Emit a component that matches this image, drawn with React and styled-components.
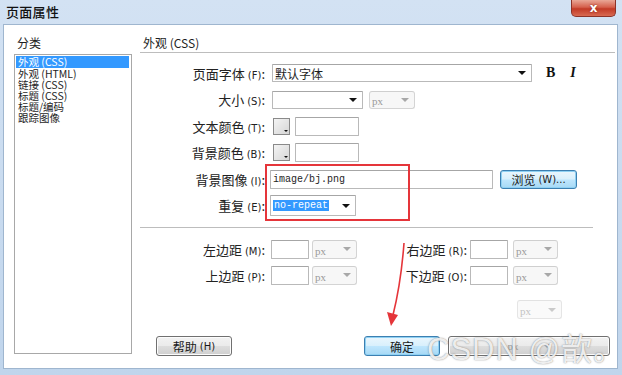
import React from "react";
import styled, { createGlobalStyle } from "styled-components";

const GlobalStyle = createGlobalStyle`
  html, body {
    margin: 0;
    padding: 0;
    background: #ffffff;
  }
  body {
    font-family: "Noto Sans CJK SC", "Liberation Sans", sans-serif;
    color: #1e1e1e;
  }
`;

const categories = ["外观 (CSS)", "外观 (HTML)", "链接 (CSS)", "标题 (CSS)", "标题/编码", "跟踪图像"];

const Window = styled.div`
  width: 622px;
  height: 375px;
  display: flex;
  flex-direction: column;
  background: linear-gradient(180deg, #d3e2f3 0%, #c0d5ec 100%);
  overflow: hidden;
`;

const TitleBar = styled.div`
  height: 24px;
  display: flex;
  justify-content: space-between;
  align-items: flex-start;
`;

const Title = styled.div`
  padding: 4px 0 0 6px;
  font-size: 13px;
  line-height: 16px;
  font-weight: 500;
  color: #111;
  letter-spacing: 0.3px;
`;

const CloseButton = styled.div`
  width: 43px;
  height: 16px;
  margin-right: 6px;
  border: 1px solid #8c3328;
  border-top: none;
  border-radius: 0 0 5px 5px;
  background: linear-gradient(180deg, #e9a796 0%, #d5604c 45%, #c23a26 55%, #d86a52 100%);
  display: flex;
  align-items: center;
  justify-content: center;
  color: #fff;
  font-family: "DejaVu Sans", sans-serif;
  font-weight: bold;
  font-size: 12px;
  line-height: 1;
  text-shadow: 0 0 2px #7a1a10;
`;

const Client = styled.div`
  position: relative;
  flex: 1;
  margin: 0 4px 6px 3px;
  background: #ffffff;
  border: 1px solid #9fb6cf;
  display: flex;
  padding: 11px 0 0 10px;
`;

const Sidebar = styled.div`
  width: 118px;
  display: flex;
  flex-direction: column;
`;

const Caption = styled.div`
  height: 18px;
  line-height: 14px;
  font-size: 12px;
  padding-left: 3px;
`;

const ListBox = styled.div`
  height: 297px;
  border: 1px solid #a8a8a8;
  padding: 1px 2px 0 1px;
`;

const ListItem = styled.div`
  height: 11px;
  line-height: 11px;
  font-size: 10.5px;
  padding-left: 2px;
  white-space: nowrap;
  background: ${(p) => (p.$active ? "#3399ff" : "transparent")};
  color: ${(p) => (p.$active ? "#ffffff" : "#1e1e1e")};
  &:first-child {
    height: 12px;
    line-height: 12px;
  }
`;

const Main = styled.div`
  flex: 1;
  margin-left: 8px;
  display: flex;
  flex-direction: column;
`;

const Heading = styled.div`
  height: 16px;
  line-height: 14px;
  font-size: 12px;
  padding-left: 3px;
`;

const Rule = styled.div`
  height: 0;
  border-top: 1px solid #bdbdbd;
  border-bottom: 1px solid #ffffff;
  margin-right: ${(p) => p.$right || 0}px;
  margin-top: ${(p) => p.$top || 0}px;
`;

const Rows = styled.div`
  margin-top: ${(p) => p.$top}px;
  display: flex;
  flex-direction: column;
`;

const Row = styled.div`
  height: ${(p) => p.$h || 26.5}px;
  display: flex;
  align-items: center;
`;

const Label = styled.div`
  width: ${(p) => p.$w || 125}px;
  flex: none;
  text-align: right;
  font-size: 13px;
  white-space: nowrap;
  margin-right: ${(p) => p.$gap ?? 6}px;
  color: #222;
`;

const Key = styled.span`
  font-family: "DejaVu Sans", sans-serif;
  font-size: 10px;
  margin-left: 3px;
`;

const Box = styled.div`
  box-sizing: border-box;
  width: ${(p) => p.$w}px;
  height: ${(p) => p.$h || 19}px;
  margin-left: ${(p) => p.$ml || 0}px;
  flex: none;
  border: 1px solid ${(p) => (p.$disabled ? "#d4d4d4" : "#b9b9b9")};
  border-top-color: ${(p) => (p.$disabled ? "#cfcfcf" : "#a6a6a6")};
  border-radius: ${(p) => (p.$disabled ? 3 : 1)}px;
  background: ${(p) => (p.$disabled ? "#f7f7f7" : "#ffffff")};
  display: flex;
  align-items: center;
  padding: 0 5px 0 2px;
  font-size: 12px;
  opacity: ${(p) => p.$fade || 1};
`;

const Value = styled.span`
  flex: 1;
  white-space: nowrap;
  overflow: hidden;
  font-family: ${(p) => (p.$mono ? '"Liberation Mono", "DejaVu Sans Mono", monospace' : "inherit")};
  font-size: ${(p) => (p.$mono ? 10 : 12)}px;
  color: ${(p) => (p.$disabled ? "#9a9a9a" : "#1e1e1e")};
`;

const Highlight = styled.span`
  background: #3399ff;
  color: #fff;
  padding: 1px 1px;
`;

const Arrow = styled.span`
  width: 0;
  height: 0;
  border-left: 4px solid transparent;
  border-right: 4px solid transparent;
  border-top: 4px solid ${(p) => (p.$disabled ? "#a8a8a8" : "#111")};
  flex: none;
`;

const Swatch = styled.div`
  position: relative;
  box-sizing: border-box;
  width: 17px;
  height: 17px;
  margin-left: 2px;
  margin-right: 5px;
  flex: none;
  border: 1px solid #8a8a8a;
  background: linear-gradient(135deg, #f4f4f4 0%, #d6d6d6 100%);
  &::after {
    content: "";
    position: absolute;
    right: 1px;
    bottom: 2px;
    border-left: 2px solid transparent;
    border-right: 2px solid transparent;
    border-top: 2px solid #111;
  }
`;

const StyleButton = styled.span`
  font-family: "Liberation Serif", serif;
  font-weight: bold;
  font-size: 14px;
  font-style: ${(p) => (p.$italic ? "italic" : "normal")};
  margin-left: ${(p) => p.$ml}px;
  color: #111;
`;

const Button = styled.div`
  box-sizing: border-box;
  width: ${(p) => p.$w}px;
  height: ${(p) => p.$h || 20}px;
  margin-left: ${(p) => p.$ml || 0}px;
  flex: none;
  display: flex;
  align-items: center;
  justify-content: center;
  gap: ${(p) => p.$gap || 0}px;
  font-size: 12px;
  border-radius: 3px;
  border: 1px solid ${(p) => (p.$focus ? "#3c7fb1" : "#707070")};
  background: ${(p) =>
    p.$focus
      ? "linear-gradient(180deg, #eaf6fd 0%, #d9f0fc 48%, #bee6fd 52%, #a7d9f5 100%)"
      : "linear-gradient(180deg, #f2f2f2 0%, #ebebeb 48%, #dddddd 52%, #cfcfcf 100%)"};
  box-shadow: inset 0 0 0 1px ${(p) => (p.$focus ? "#8fd1f3" : "#fcfcfc")};
  color: #1a1a1a;
`;

const Faint = styled.span`
  color: #9a9a9a;
  font-family: "Liberation Serif", serif;
  font-size: 11px;
`;

const ButtonRow = styled.div`
  margin-top: ${(p) => p.$top}px;
  display: flex;
  align-items: center;
`;

const RedFrame = styled.div`
  position: absolute;
  left: 261px;
  top: 139px;
  width: 145px;
  height: 57px;
  border: 2px solid #e5353a;
  box-sizing: border-box;
  pointer-events: none;
`;

const Watermark = styled.div`
  position: absolute;
  left: 423px;
  top: 299px;
  font-family: "Liberation Sans", "Noto Sans CJK SC", sans-serif;
  font-size: 31px;
  letter-spacing: 1px;
  color: rgba(255, 255, 255, 0.85);
  text-shadow: 0 0 1px rgba(90, 90, 90, 0.55), 0 0 2px rgba(90, 90, 90, 0.35);
  white-space: nowrap;
  pointer-events: none;
`;

const Overlay = styled.svg`
  position: absolute;
  left: 0;
  top: 0;
  pointer-events: none;
`;

const Select = ({ w, h, ml, children, disabled, fade }) => (
  <Box $w={w} $h={h} $ml={ml} $disabled={disabled} $fade={fade}>
    <Value $disabled={disabled}>{children}</Value>
    <Arrow $disabled={disabled} />
  </Box>
);

const PxSelect = ({ ml, fade }) => (
  <Select w={45} h={19} ml={ml} disabled fade={fade}>
    <Faint>px</Faint>
  </Select>
);

const MarginRow = ({ left, leftKey, right, rightKey }) => (
  <Row $h={26}>
    <Label>
      {left}
      <Key>({leftKey})</Key>:
    </Label>
    <Box $w={38} />
    <PxSelect ml={3} />
    <Label $w={110} $gap={3}>
      {right}
      <Key>({rightKey})</Key>:
    </Label>
    <Box $w={38} />
    <PxSelect ml={5} />
  </Row>
);

export default function App() {
  return (
    <>
      <GlobalStyle />
      <Window>
        <TitleBar>
          <Title>页面属性</Title>
          <CloseButton>x</CloseButton>
        </TitleBar>
        <Client>
          <Sidebar>
            <Caption>分类</Caption>
            <ListBox>
              {categories.map((c, i) => (
                <ListItem key={c} $active={i === 0}>
                  {c}
                </ListItem>
              ))}
            </ListBox>
          </Sidebar>
          <Main>
            <Heading>外观 (CSS)</Heading>
            <Rule $right={2} />
            <Rows $top={6}>
              <Row>
                <Label>
                  页面字体<Key>(F)</Key>:
                </Label>
                <Select w={260} h={18} ml={1}>
                  默认字体
                </Select>
                <StyleButton $ml={14}>B</StyleButton>
                <StyleButton $ml={15} $italic>
                  I
                </StyleButton>
              </Row>
              <Row>
                <Label>
                  大小<Key>(S)</Key>:
                </Label>
                <Select w={91} h={18} ml={1} />
                <Select w={46} h={18} ml={6} disabled>
                  <Faint>px</Faint>
                </Select>
              </Row>
              <Row>
                <Label>
                  文本颜色<Key>(T)</Key>:
                </Label>
                <Swatch />
                <Box $w={64} />
              </Row>
              <Row>
                <Label>
                  背景颜色<Key>(B)</Key>:
                </Label>
                <Swatch />
                <Box $w={64} />
              </Row>
              <Row>
                <Label>
                  背景图像<Key>(I)</Key>:
                </Label>
                <Box $w={223} $ml={-1}>
                  <Value $mono>image/bj.png</Value>
                </Box>
                <Button $w={77} $h={19} $ml={7} $focus>
                  浏览<Key>(W)...</Key>
                </Button>
              </Row>
              <Row>
                <Label>
                  重复<Key>(E)</Key>:
                </Label>
                <Box $w={86} $h={21} $ml={-1}>
                  <Value $mono>
                    <Highlight>no-repeat</Highlight>
                  </Value>
                  <Arrow />
                </Box>
              </Row>
            </Rows>
            <Rule $right={24} $top={8} />
            <Rows $top={7}>
              <MarginRow left="左边距" leftKey="M" right="右边距" rightKey="R" />
              <MarginRow left="上边距" leftKey="P" right="下边距" rightKey="O" />
            </Rows>
            <ButtonRow $top={12}>
              <PxSelect ml={377} fade={0.6} />
            </ButtonRow>
            <ButtonRow $top={17}>
              <Button $w={76} $ml={16}>
                帮助<Key>(H)</Key>
              </Button>
              <Button $w={76} $ml={132} $focus>
                确定
              </Button>
              <Button $w={162} $ml={8} $gap={24}>
                <Faint>px</Faint>
                <Arrow $disabled />
              </Button>
            </ButtonRow>
          </Main>
          <RedFrame />
          <Overlay width="615" height="345" viewBox="0 0 615 345">
            <path d="M400 218 Q397 258 389 290" stroke="#e5353a" strokeWidth="1.6" fill="none" />
            <polygon points="383,287 394,290 387,301" fill="#e5353a" />
          </Overlay>
          <Watermark>CSDN @歆。</Watermark>
        </Client>
      </Window>
    </>
  );
}
